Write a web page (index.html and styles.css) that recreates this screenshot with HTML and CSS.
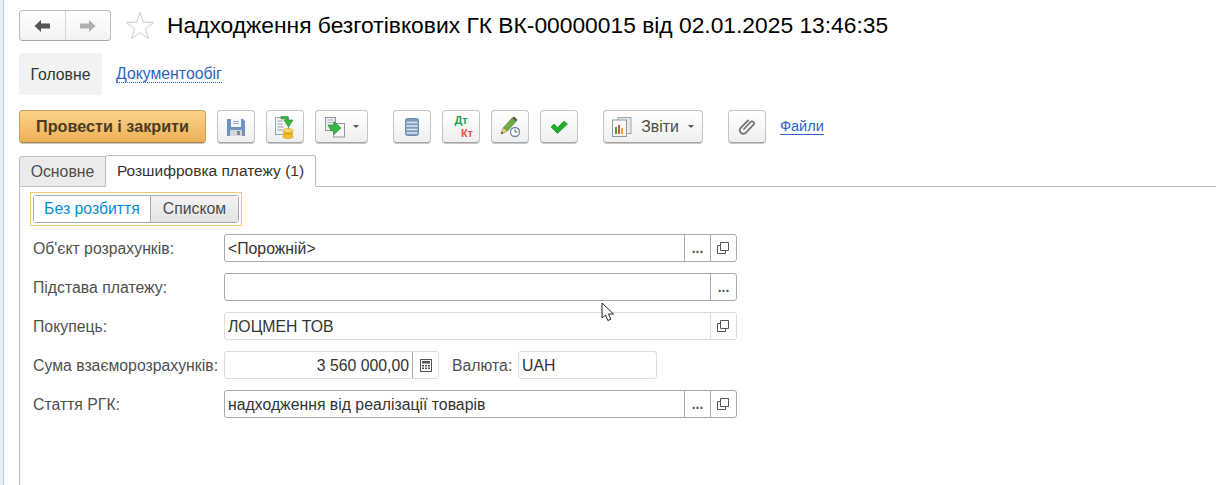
FILE: index.html
```html
<!DOCTYPE html>
<html lang="uk">
<head>
  <meta charset="UTF-8" />
  <meta name="viewport" content="width=device-width, initial-scale=1" />
  <title>Надходження безготівкових ГК</title>
  <link rel="stylesheet" href="styles.css">
</head>
<body>
  <div class="side-strip"></div>
  <div class="page">
    <div class="title-row">
      <div class="nav-group">
        <button class="nav-btn">
          <svg width="18" height="14" viewBox="0 0 18 14"><path d="M8 1 1.500 7 8 13V9.500h9v-5H8z" fill="#555"/></svg>
        </button>
        <button class="nav-btn">
          <svg width="18" height="14" viewBox="0 0 18 14"><path d="M10 1l6.500 6L10 13V9.500H1v-5h9z" fill="#b0b0b0"/></svg>
        </button>
      </div>
      <svg class="star" width="30" height="30" viewBox="0 0 30 30"><path d="M15 1.500l3.400 9.700 10.200.2-8.100 6.300 2.900 9.800L15 21.700l-8.400 5.800 2.900-9.800-8.100-6.300 10.200-.2z" fill="#fff" stroke="#c9ced3"/></svg>
      <h1>Надходження безготівкових ГК ВК-00000015 від 02.01.2025 13:46:35</h1>
    </div>

    <div class="section-row">
      <div class="section-current">Головне</div>
      <a class="section-link" href="#">Документообіг</a>
    </div>

    <div class="toolbar">
      <button class="btn btn-primary">Провести і закрити</button>
      <button class="btn btn-icon gap-s">
        <svg width="18" height="18" viewBox="0 0 18 18"><path d="M0 1h16l2 2v15H0z" fill="#6d93c2"/><rect x="4" y="1" width="10" height="8" fill="#f4f6f8"/><path d="M6 3.500h6M6 5.500h6" stroke="#9db2c8"/><rect x="3" y="12" width="12" height="6" fill="#d3d6da"/><rect x="10" y="13" width="3" height="4" fill="#7d8c9c"/></svg>
      </button>
      <button class="btn btn-icon gap-s">
        <svg width="22" height="24" viewBox="0 0 22 24"><rect x="1.500" y="2.500" width="13" height="17" fill="#f3f3f3" stroke="#9aa5ae"/><path d="M3.500 6h5M3.500 9h5M3.500 12h6M3.500 15h5" stroke="#9aa5ae"/><rect x="9" y="15.500" width="10" height="6" fill="#f2c230"/><ellipse cx="14" cy="21.500" rx="5" ry="2" fill="#f2c230" stroke="#c8981a" stroke-width=".6"/><path d="M9 18.500h10" stroke="#c8981a" stroke-width=".6"/><ellipse cx="14" cy="15.500" rx="5" ry="2" fill="#f8dc70" stroke="#c8981a" stroke-width=".6"/><path d="M7 1.500h7v3.500h5l-4.500 7L10 5h2V4H7z" fill="#3cb53c" stroke="#1f8a2c" stroke-width=".6"/></svg>
      </button>
      <button class="btn btn-drop gap-s">
        <svg width="22" height="22" viewBox="0 0 22 22"><rect x="1.500" y="1.500" width="10" height="13" fill="#eee" stroke="#8e9aa3"/><path d="M3.500 4h6M3.500 6.500h6" stroke="#a9b3ba"/><rect x="9.500" y="7.500" width="11" height="13.500" fill="#f6f6f6" stroke="#8e9aa3"/><path d="M4 9h6V5.500l7 6.500-7 6.500V15H7z" fill="#39b54a" stroke="#218a35" stroke-width=".6"/></svg>
        <span class="caret"></span>
      </button>
      <button class="btn btn-icon gap-l">
        <svg width="14" height="18" viewBox="0 0 14 18"><rect x=".5" y=".5" width="13" height="17" rx="2" fill="#7d9db8" stroke="#6b8aa5"/><path d="M1.500 4.500h11M1.500 8h11M1.500 11.500h11M1.500 15h11" stroke="#dfe8ef" stroke-width="1.300"/></svg>
      </button>
      <button class="btn btn-icon gap-s">
        <span class="dtkt"><span class="dt">Дт</span><span class="kt">Кт</span></span>
      </button>
      <button class="btn btn-icon gap-s">
        <svg width="22" height="22" viewBox="0 0 22 22"><path d="M2 18l2-6L13 2l4 3.500-9 10z" fill="#6fae44" stroke="#4d7f2e" stroke-width=".6"/><path d="M13 2l2-1.500 3.500 3.200L17 5.500z" fill="#555"/><path d="M2 18l2-6 4 3.500z" fill="#f2c88a"/><path d="M2 18l.8-2.500 1.800 1.500z" fill="#444"/><circle cx="16" cy="16" r="4.500" fill="#fff" stroke="#6b8aa5" stroke-width="1.300"/><path d="M16 13.500V16h2.300" fill="none" stroke="#555"/></svg>
      </button>
      <button class="btn btn-icon gap-s">
        <svg width="18" height="14" viewBox="0 0 18 14"><path d="M1 7l3-3 3.500 3.500L14 1l3.500 3L7.500 13.500z" fill="#1fb125" stroke="#15891b" stroke-width=".6"/></svg>
      </button>
      <button class="btn btn-reports gap-m">
        <svg width="20" height="20" viewBox="0 0 20 20"><rect x="6" y="0.500" width="13" height="16" fill="#e6e9ec" stroke="#9aa5ae"/><rect x="0.500" y="3" width="14" height="16.500" fill="#f8f8f8" stroke="#8e9aa3"/><rect x="3" y="10" width="2" height="7" fill="#4a9e4a"/><rect x="6" y="8" width="2" height="9" fill="#d9534f"/><rect x="9" y="11" width="2" height="6" fill="#e6a23c"/></svg>
        <span>Звіти</span>
        <span class="caret"></span>
      </button>
      <button class="btn btn-icon gap-m">
        <svg width="18" height="18" viewBox="0 0 18 18"><path d="M6 11.500l6.500-7a2 2 0 0 1 3 2.700L7.500 15.500a3.500 3.500 0 0 1-5-4.800L10 3" transform="translate(0 -.5)" fill="none" stroke="#757575" stroke-width="1.800" stroke-linecap="round"/></svg>
      </button>
      <a class="files-link" href="#">Файли</a>
    </div>

    <div class="tabs">
      <div class="tab">Основне</div>
      <div class="tab tab-active">Розшифровка платежу (1)</div>
      <div class="tabs-rest"></div>
    </div>

    <div class="tab-body">
      <div class="toggle-frame">
        <div class="toggle">
          <div class="toggle-item toggle-on">Без розбиття</div>
          <div class="toggle-item">Списком</div>
        </div>
      </div>

      <div class="form">
        <div class="row">
          <label class="lbl">Об'єкт розрахунків:</label>
          <div class="field field-wide">
            <div class="val">&lt;Порожній&gt;</div>
            <div class="fbtn dots">...</div>
            <div class="fbtn">
              <svg class="open-ico" width="12" height="12" viewBox="0 0 12 12"><path d="M3.500.5h8v8h-8z M3 3.500H.5v8h8V9" fill="none" stroke="#555"/></svg>
            </div>
          </div>
        </div>
        <div class="row">
          <label class="lbl">Підстава платежу:</label>
          <div class="field field-wide">
            <div class="val"></div>
            <div class="fbtn dots">...</div>
          </div>
        </div>
        <div class="row">
          <label class="lbl">Покупець:</label>
          <div class="field field-wide field-ro">
            <div class="val">ЛОЦМЕН ТОВ</div>
            <div class="fbtn">
              <svg class="open-ico" width="12" height="12" viewBox="0 0 12 12"><path d="M3.500.5h8v8h-8z M3 3.500H.5v8h8V9" fill="none" stroke="#555"/></svg>
            </div>
          </div>
        </div>
        <div class="row">
          <label class="lbl">Сума взаєморозрахунків:</label>
          <div class="field field-sum field-ro">
            <div class="val val-num">3 560 000,00</div>
            <div class="fbtn fbtn-dark">
              <svg width="12" height="13" viewBox="0 0 12 13"><rect x=".5" y=".5" width="11" height="12" fill="none" stroke="#555"/><rect x="2" y="2" width="8" height="2.500" fill="#555"/><path d="M2 6h2v1.500H2zM5 6h2v1.500H5zM8 6h2v1.500H8zM2 8.500h2V10H2zM5 8.500h2V10H5zM8 8.500h2V10H8z" fill="#555"/></svg>
            </div>
          </div>
          <label class="lbl-inline">Валюта:</label>
          <div class="field field-cur field-ro"><div class="val">UAH</div></div>
        </div>
        <div class="row">
          <label class="lbl">Стаття РГК:</label>
          <div class="field field-wide">
            <div class="val">надходження від реалізації товарів</div>
            <div class="fbtn dots">...</div>
            <div class="fbtn">
              <svg class="open-ico" width="12" height="12" viewBox="0 0 12 12"><path d="M3.500.5h8v8h-8z M3 3.500H.5v8h8V9" fill="none" stroke="#555"/></svg>
            </div>
          </div>
        </div>
      </div>
    </div>
  </div>

  <!-- mouse pointer caught in the screenshot -->
  <svg class="pointer" width="14" height="21" viewBox="0 0 14 21"><path d="M1 1v15l3.500-3 2.300 5.500 3-1.300L7.500 12H12.500z" fill="#fff" stroke="#222"/></svg>
</body>
</html>
```

FILE: styles.css
```css
html, body {
  margin: 0;
  height: 100%;
  overflow: hidden;
}
body {
  display: flex;
  background: #fff;
  font-family: 'Liberation Sans', Arial, sans-serif;
  font-size: 15.8px;
  color: #4b4b4b;
}
.side-strip {
  width: 3px;
  flex: none;
  background: #e6eef3;
  border-right: 1px solid #c4c8cc;
}
.page {
  flex: 1;
  padding: 10px 0 0 15px;
  min-width: 0;
}

/* title */
.title-row {
  display: flex;
  align-items: center;
  height: 31px;
}
.nav-group {
  display: flex;
  width: 92px;
  height: 31px;
  box-sizing: border-box;
  border: 1px solid #bdbdbd;
  border-bottom-color: #a6a6a6;
  border-radius: 4px;
  background: linear-gradient(#fff, #f2f2f2);
}
.nav-btn {
  flex: 1;
  padding: 0;
  border: none;
  background: none;
  display: flex;
  align-items: center;
  justify-content: center;
}
.nav-btn + .nav-btn {
  border-left: 1px solid #d4d4d4;
}
.star {
  margin-left: 14px;
  flex: none;
}
h1 {
  margin: 0 0 0 12px;
  font-size: 22.8px;
  font-weight: normal;
  color: #000;
  white-space: nowrap;
}

/* sections */
.section-row {
  display: flex;
  align-items: center;
  margin-top: 12px;
  height: 42px;
}
.section-current {
  width: 83px;
  height: 42px;
  line-height: 43px;
  text-align: center;
  background: #f2f2f2;
  border-radius: 3px;
  color: #333;
}
.section-link {
  margin: 1px 0 0 14px;
  color: #2c62c2;
  text-decoration: none;
  border-bottom: 1px dotted #2c62c2;
  line-height: 16px;
}

/* toolbar */
.toolbar {
  display: flex;
  align-items: center;
  margin-top: 15px;
  height: 33px;
}
.btn {
  height: 33px;
  box-sizing: border-box;
  padding: 0;
  border: 1px solid #c4c4c4;
  border-bottom-color: #a4a4a4;
  border-radius: 4px;
  background: linear-gradient(#fff, #efefef);
  box-shadow: 0 1px 0 #c8c8c8;
  font: inherit;
  color: #4b4b4b;
  display: flex;
  align-items: center;
  justify-content: center;
  flex: none;
}
.btn-primary {
  width: 187px;
  background: linear-gradient(#fbd38b, #eeb055);
  border-color: #c8a063;
  border-bottom-color: #a8834a;
  font-size: 16.2px;
  font-weight: bold;
  color: #4a3b25;
}
.btn-icon {
  width: 38px;
}
.btn-drop {
  width: 53px;
  gap: 7px;
}
.btn-reports {
  width: 100px;
  gap: 9px;
}
.gap-s { margin-left: 11px; }
.gap-m { margin-left: 25px; }
.gap-l { margin-left: 25px; }
.caret {
  width: 0;
  height: 0;
  border-left: 3px solid transparent;
  border-right: 3px solid transparent;
  border-top: 3px solid #555;
}
.dtkt {
  display: flex;
  flex-direction: column;
  width: 24px;
  font-size: 11px;
  font-weight: bold;
  line-height: 13px;
}
.dt { color: #1f9d55; }
.kt { color: #e2504f; align-self: flex-end; }
.files-link {
  margin-left: 14px;
  color: #2c62c2;
  font-size: 14.5px;
  text-decoration: none;
  border-bottom: 1px solid #2c62c2;
  line-height: 16px;
}

/* tabs */
.tabs {
  display: flex;
  align-items: flex-end;
  margin-top: 12px;
  height: 32px;
}
.tab {
  width: 87px;
  height: 31px;
  box-sizing: border-box;
  line-height: 30px;
  text-align: center;
  background: #ebebeb;
  border: 1px solid #bdbdbd;
  border-radius: 3px 0 0 0;
}
.tab-active {
  width: 211px;
  height: 32px;
  margin-left: -1px;
  background: #fff;
  border-bottom-color: #fff;
  border-radius: 3px 3px 0 0;
  font-size: 15.5px;
  color: #333;
}
.tabs-rest {
  flex: 1;
  border-bottom: 1px solid #bdbdbd;
}
.tab-body {
  height: 300px;
  border-left: 1px solid #bdbdbd;
  padding: 5px 0 0 10px;
}

/* toggle */
.toggle-frame {
  display: inline-block;
  vertical-align: top;
  padding: 2px;
  border: 1px solid #f5c775;
}
.toggle {
  display: flex;
  height: 28px;
  box-sizing: border-box;
  border: 1px solid #a8a8a8;
  border-radius: 3px;
}
.toggle-item {
  width: 87px;
  line-height: 26px;
  text-align: center;
  background: linear-gradient(#f3f3f3, #e3e3e3);
  border-left: 1px solid #a8a8a8;
}
.toggle-on {
  width: 116px;
  border-left: none;
  background: #fff;
  color: #0a8ad6;
}

/* form */
.form {
  margin-top: 8px;
  margin-left: 3px;
  display: flex;
  flex-direction: column;
  gap: 11px;
}
.row {
  display: flex;
  align-items: center;
  height: 28px;
}
.lbl {
  width: 191px;
  flex: none;
  padding-top: 2px;
  color: #4f4f4f;
  white-space: nowrap;
}
.lbl-inline {
  margin-left: 13px;
  padding-top: 2px;
  width: 66px;
  flex: none;
  color: #4f4f4f;
}
.field {
  display: flex;
  height: 28px;
  box-sizing: border-box;
  border: 1px solid #a9a9a9;
  border-radius: 3px;
  background: #fff;
  color: #333;
}
.field-ro {
  border-color: #dcdcdc;
}
.field-wide { width: 513px; }
.field-sum { width: 215px; }
.field-cur { width: 139px; }
.val {
  flex: 1;
  min-width: 0;
  padding: 0 3px;
  line-height: 28px;
  white-space: nowrap;
}
.val-num {
  text-align: right;
}
.fbtn {
  width: 26px;
  box-sizing: border-box;
  flex: none;
  display: flex;
  align-items: center;
  justify-content: center;
  border-left: 1px solid #a9a9a9;
}
.field-ro .fbtn {
  border-left-color: #dcdcdc;
}
.field-ro .fbtn-dark {
  border-left-color: #a9a9a9;
}
.open-ico {
  margin-right: 1px;
}
.dots {
  color: #555;
  font-size: 14px;
  font-weight: bold;
  line-height: 20px;
}
.pointer {
  position: absolute;
  left: 601px;
  top: 302px;
}
```
